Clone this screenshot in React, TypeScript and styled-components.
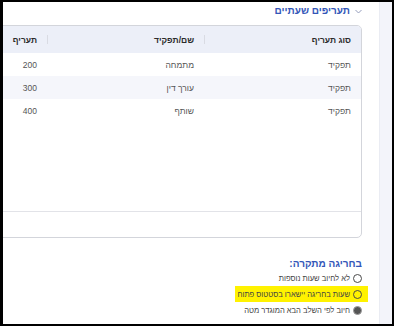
import React from "react";
import styled, { createGlobalStyle } from "styled-components";

const GlobalStyle = createGlobalStyle`
  html, body { margin: 0; padding: 0; background: #fff; }
  body { font-family: "Liberation Sans", "DejaVu Sans", Arial, sans-serif; }
`;

const Frame = styled.div`
  width: 394px;
  height: 326px;
  box-sizing: border-box;
  border-style: solid;
  border-color: #000;
  border-width: 2px 2px 2px 3px;
  display: flex;
  overflow: hidden;
`;

const Main = styled.div`
  flex: 1;
  min-width: 0;
  direction: rtl;
  background: #fff;
  padding: 2px 17px 0 0;
  overflow: hidden;
  display: flex;
  flex-direction: column;
`;

const Side = styled.div`
  width: 12px;
  background: #f3f4fa;
  border-left: 1px solid #eaecf3;
`;

const TitleRow = styled.div`
  display: flex;
  align-items: center;
  gap: 5px;
  height: 14px;
  margin-bottom: 7px;
`;

const Chevron = styled.svg`
  width: 7px;
  height: 5px;
  flex-shrink: 0;
`;

const Title = styled.h2`
  margin: 0;
  font-size: 10px;
  line-height: 14px;
  font-weight: 700;
  color: #3356b8;
`;

const Card = styled.div`
  width: 471px;
  height: 213px;
  flex-shrink: 0;
  box-sizing: border-box;
  border: 1px solid #d3d5db;
  border-radius: 5px;
  display: flex;
  flex-direction: column;
  overflow: hidden;
  align-self: flex-start;
`;

const Grid = styled.div<{ $header?: boolean; $striped?: boolean }>`
  display: grid;
  grid-template-columns: 157px 157px 1fr;
  height: ${(p) => (p.$header ? "27px" : "23px")};
  background: ${(p) => (p.$header ? "#eceff8" : p.$striped ? "#f5f6fb" : "#fff")};
  flex-shrink: 0;
`;

const HeadCell = styled.div`
  display: flex;
  align-items: center;
  justify-content: space-between;
  padding-right: 10px;
  font-size: 8.5px;
  font-weight: 700;
  color: #2b2b2b;
`;

const Sep = styled.span`
  width: 1px;
  height: 9px;
  background: #d9dbe3;
`;

const Cell = styled.div`
  display: flex;
  align-items: center;
  padding-right: 10px;
  font-size: 8.5px;
  color: #555;
`;

const Body = styled.div`
  flex: 1;
`;

const Footer = styled.div`
  height: 25px;
  border-top: 1px solid #e2e3e8;
  flex-shrink: 0;
`;

const Section = styled.div`
  margin-top: 19px;
  display: flex;
  flex-direction: column;
  align-items: flex-start;
`;

const SectionTitle = styled.div`
  font-size: 10px;
  line-height: 13px;
  font-weight: 700;
  color: #3356b8;
`;

const Option = styled.label<{ $highlight?: boolean }>`
  display: flex;
  align-items: center;
  gap: 3px;
  height: 16px;
  font-size: 7.6px;
  color: #444;
  background: ${(p) => (p.$highlight ? "#fff200" : "transparent")};
  padding: ${(p) => (p.$highlight ? "0 6px 0 2px" : "0")};
  margin-right: ${(p) => (p.$highlight ? "-6px" : "0")};
`;

const Radio = styled.span<{ $checked?: boolean }>`
  width: 9px;
  height: 9px;
  box-sizing: border-box;
  border-radius: 50%;
  border: 1px solid ${(p) => (p.$checked ? "#9a9a9a" : "#4a4a4a")};
  background: ${(p) => (p.$checked ? "#555" : "transparent")};
  flex-shrink: 0;
`;

const rows = [
  { type: "תפקיד", name: "מתמחה", rate: "200" },
  { type: "תפקיד", name: "עורך דין", rate: "300" },
  { type: "תפקיד", name: "שותף", rate: "400" },
];

const options = [
  { label: "לא לחיוב שעות נוספות" },
  { label: "שעות בחריגה יישארו בסטטוס פתוח", highlight: true },
  { label: "חיוב לפי השלב הבא המוגדר מטה", checked: true },
];

export default function App() {
  return (
    <>
      <GlobalStyle />
      <Frame>
        <Main>
          <TitleRow>
            <Chevron viewBox="0 0 7 5">
              <path d="M0.5 1 L3.5 4 L6.5 1" fill="none" stroke="#8a93b5" strokeWidth="0.9" />
            </Chevron>
            <Title>תעריפים שעתיים</Title>
          </TitleRow>
          <Card>
            <Grid $header>
              <HeadCell>
                סוג תעריף
                <Sep />
              </HeadCell>
              <HeadCell>
                שם/תפקיד
                <Sep />
              </HeadCell>
              <HeadCell>תעריף</HeadCell>
            </Grid>
            {rows.map((r, i) => (
              <Grid key={i} $striped={i % 2 === 1}>
                <Cell>{r.type}</Cell>
                <Cell>{r.name}</Cell>
                <Cell>{r.rate}</Cell>
              </Grid>
            ))}
            <Body />
            <Footer />
          </Card>
          <Section>
            <SectionTitle>בחריגה מתקרה:</SectionTitle>
            {options.map((o, i) => (
              <Option key={i} $highlight={o.highlight}>
                <Radio $checked={o.checked} />
                {o.label}
              </Option>
            ))}
          </Section>
        </Main>
        <Side />
      </Frame>
    </>
  );
}
